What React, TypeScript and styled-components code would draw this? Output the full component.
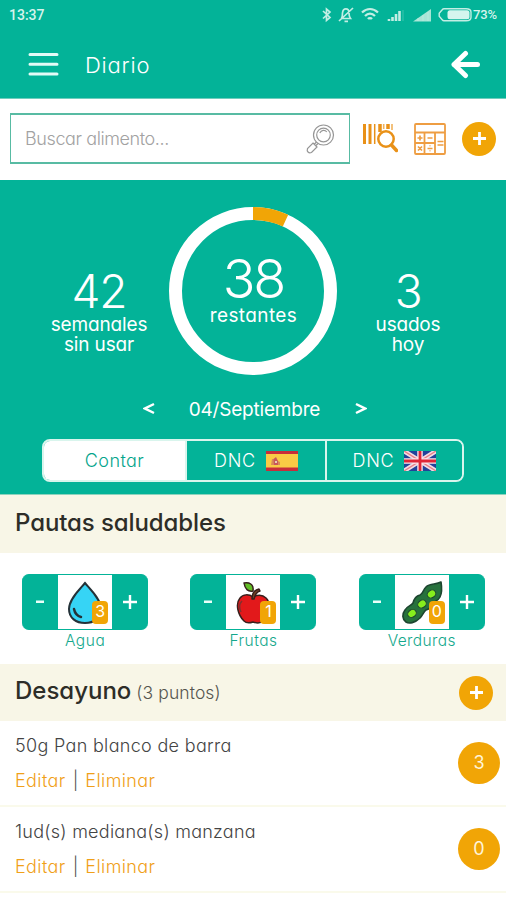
import React from "react";
import styled, { createGlobalStyle } from "styled-components";

const green = "#03b398";
const orange = "#f1a506";
const cream = "#f8f6e7";

const GlobalStyle = createGlobalStyle`
  * { box-sizing: border-box; }
  body { margin: 0; background: #fff; }
  button { font: inherit; color: inherit; background: none; border: 0; padding: 0; letter-spacing: inherit; }
  svg { display: block; flex: none; }
`;

const Screen = styled.main`
  width: 506px;
  height: 900px;
  overflow: hidden;
  background: #fff;
  color: #555;
  font-family: Inter, "Liberation Sans", sans-serif;
  font-feature-settings: "cv11";
  font-weight: 300;
  font-size: 18px;
`;

const TopBar = styled.header`
  height: 99px;
  background: ${green};
  border-bottom: 1px solid #6fcdbd;
  color: #fff;
`;

const StatusBar = styled.div`
  height: 30px;
  padding: 0 8px 0 9px;
  display: flex;
  align-items: center;
  justify-content: space-between;
  font: 500 13px/30px Roboto, sans-serif;
  color: #d5f3ec;
`;

const Clock = styled.span`
  font-size: 14px;
`;

const Percent = styled.span`
  width: 25px;
  font-size: 13px;
  letter-spacing: -0.2px;
`;

const StatusIcons = styled.div`
  display: flex;
  align-items: center;
  gap: 1px;
`;

const TitleRow = styled.div`
  height: 68px;
  padding: 0 25px 0 28px;
  display: flex;
  align-items: center;
`;

const Title = styled.h1`
  margin: 0 auto 0 26px;
  padding-top: 1px;
  font-size: 22px;
  font-weight: 350;
  letter-spacing: 0.8px;
`;

const SearchBar = styled.div`
  height: 81px;
  padding: 14px 10px 16px 10px;
  display: flex;
  align-items: center;
`;

const SearchField = styled.div`
  width: 340px;
  height: 51px;
  padding: 0 14px;
  border: 2px solid #58bba3;
  border-width: 2px 1.5px;
  display: flex;
  align-items: center;
  justify-content: space-between;
  color: #a2a2a2;
  letter-spacing: -0.4px;
`;

const SearchActions = styled.div`
  flex: 1;
  padding-left: 12px;
  display: flex;
  align-items: center;
  justify-content: space-between;
`;

const RoundButton = styled.button`
  width: 34px;
  height: 34px;
  border-radius: 50%;
  background: ${orange};
  display: grid;
  place-items: center;
`;

const Summary = styled.section`
  height: 315px;
  padding-top: 27px;
  background: ${green};
  border-bottom: 1px solid #8dd3bd;
  color: #fff;
  display: flex;
  flex-direction: column;
  align-items: center;
`;

const Figures = styled.div`
  width: 100%;
  height: 168px;
  padding-left: 29px;
  display: grid;
  grid-template-columns: 140px 168px 142px;
`;

const Figure = styled.div`
  padding-top: 61px;
  display: flex;
  flex-direction: column;
  align-items: center;
`;

const FigureValue = styled.strong<{ $large?: boolean }>`
  font-weight: 300;
  font-size: ${(p) => (p.$large ? 54 : 46)}px;
  line-height: ${(p) => (p.$large ? 54 : 47)}px;
  letter-spacing: ${(p) => (p.$large ? -2 : -1.2)}px;
`;

const FigureLabel = styled.span<{ $spacing?: number }>`
  font-weight: 400;
  font-size: 19px;
  line-height: 20px;
  letter-spacing: ${(p) => p.$spacing ?? 0}px;
  text-align: center;
  white-space: pre-line;
`;

const Dial = styled.div`
  display: grid;
  grid-template: 168px / 168px;
  & > * { grid-area: 1 / 1; }
`;

const DialText = styled.div`
  padding: 45px 0 0 1px;
  display: flex;
  flex-direction: column;
  align-items: center;
`;

const DateNav = styled.div`
  height: 38px;
  margin: 15px 0 0 3px;
  padding-top: 1px;
  width: 224px;
  display: flex;
  justify-content: space-between;
  line-height: 38px;
  font-weight: 400;
`;

const DateText = styled.span`
  font-size: 19px;
  letter-spacing: -0.2px;
`;

const Tabs = styled.div`
  margin-top: 11px;
  width: 422px;
  height: 43px;
  display: grid;
  grid-template-columns: 141px 140px 1fr;
  border: 2px solid #d9f5ed;
  border-radius: 8px;
  overflow: hidden;
`;

const Tab = styled.button<{ $active?: boolean }>`
  display: flex;
  align-items: center;
  justify-content: center;
  gap: 10px;
  font-size: 18px;
  font-weight: ${(p) => (p.$active ? 300 : 350)};
  letter-spacing: ${(p) => (p.$active ? 0.4 : 0.7)}px;
  background: ${(p) => (p.$active ? "#fff" : green)};
  color: ${(p) => (p.$active ? "#05a58c" : "#fff")};

  & + & { border-left: 2px solid #d9f5ed; }
`;

const SectionHead = styled.div<{ $height: number }>`
  height: ${(p) => p.$height}px;
  padding: 0 13px 0 15px;
  background: ${cream};
  display: flex;
  align-items: center;
  justify-content: space-between;
`;

const SectionTitle = styled.h2<{ $spacing: number }>`
  margin: 0;
  padding-bottom: 4px;
  color: #2d2d28;
  font-size: 24px;
  font-weight: 450;
  letter-spacing: ${(p) => p.$spacing}px;
`;

const Points = styled.small`
  margin-left: 5px;
  color: #55554f;
  font-size: 17.5px;
  font-weight: 300;
  letter-spacing: 0.1px;
`;

const Trackers = styled.div`
  height: 111px;
  padding: 21px 0 0 1px;
  display: grid;
  grid-template-columns: repeat(3, 1fr);
`;

const Tracker = styled.div`
  display: flex;
  flex-direction: column;
  align-items: center;
`;

const Stepper = styled.div`
  width: 126px;
  height: 56px;
  display: grid;
  grid-template-columns: 36px 54px 36px;
  border: 0 solid ${green};
  border-width: 1px 0;
  border-radius: 7px;
  background: ${green};
  overflow: hidden;
`;

const StepButton = styled.button`
  color: #eafff9;
  display: grid;
  place-items: center;
`;

const Picture = styled.div`
  position: relative;
  background: #fff;
`;

const Badge = styled.span`
  position: absolute;
  right: 4px;
  bottom: 5px;
  width: 16px;
  height: 23px;
  border-radius: 4px;
  background: ${orange};
  color: #fff;
  font-size: 16px;
  font-weight: 400;
  line-height: 21px;
  text-align: center;
`;

const TrackerLabel = styled.span<{ $spacing: number }>`
  padding-top: 1px;
  color: #14a88c;
  font-size: 15.5px;
  line-height: 20px;
  letter-spacing: ${(p) => p.$spacing}px;
`;

const Entry = styled.article`
  height: 86px;
  padding: 0 6px 0 15px;
  border-bottom: 2px solid #fafaeb;
  display: flex;
  align-items: center;
  justify-content: space-between;
`;

const EntryName = styled.div<{ $spacing: number }>`
  line-height: 35px;
  letter-spacing: ${(p) => p.$spacing}px;
  color: #444;
  white-space: nowrap;
`;

const EntryActions = styled.div`
  padding-bottom: 1px;
  display: flex;
  gap: 7px;
  line-height: 35px;
  color: #555;
`;

const Link = styled.button<{ $spacing: number }>`
  color: #f0a018;
  font-weight: 350;
  letter-spacing: ${(p) => p.$spacing}px;
`;

const Score = styled.span`
  width: 42px;
  height: 42px;
  border-radius: 50%;
  background: ${orange};
  color: #fff4d8;
  font-weight: 400;
  line-height: 42px;
  text-align: center;
`;

const Plus = ({ size = 14, weight = 3 }) => (
  <svg width={size} height={size} viewBox="0 0 14 14" stroke="#fff" strokeWidth={weight}>
    <path d="M7 0v14M0 7h14" />
  </svg>
);

const StatusGlyphs = () => (
  <svg width="153" height="18" viewBox="317 6 153 18" fill="none" stroke="#c3eee4" strokeWidth="1.7">
    <path d="M321 11l7 6.500-3.500 3V9l3.500 3-7 6.500" />
    <path d="M339.500 18.500h9c-1.500-2-1.500-3.500-1.500-5.500 0-5.500-6-5.500-6.500 0 0 2 0 4-1 5.500M337 21L351 8M342.500 21.300h3.500" />
    <path d="M360 12.500c5-4.500 11-4.500 16 0M363 16c3-3 7-3 10 0M366 19c1-1.300 3-1.300 4 0" strokeWidth="2.300" />
    <path d="M387 21v-2M390.500 21v-4M394 21v-7M397.500 21V11" strokeWidth="2.600" />
    <path d="M401 21V10" strokeWidth="1" opacity=".3" />
    <path d="M411 21.500h18V9z" fill="#a8e5d6" stroke="none" />
    <path d="M416 21v-3M421 21v-6M426 21V12" strokeWidth="1" opacity=".6" />
    <path d="M442 8.700h22q5 0 5 3.500v5q0 3.500-5 3.500h-22q-1 0-1.800-1l-3-3.500v-3l3-3.500q.8-1 1.800-1z" strokeWidth="1.400" />
    <rect x="445.500" y="10.200" width="22" height="9" rx="2.500" fill="#d5f5ee" stroke="none" />
  </svg>
);

const MenuIcon = () => (
  <svg width="31" height="26" viewBox="0 0 31 26" stroke="#e3fbf6" strokeWidth="3" strokeLinecap="round">
    <path d="M2 3.500h27M2 13.200h27M2 22.900h27" />
  </svg>
);

const BackArrow = () => (
  <svg width="31" height="30" viewBox="0 0 31 30" fill="none" stroke="#fff" strokeWidth="5" strokeLinecap="round" strokeLinejoin="round">
    <path d="M15.500 4.500L4 15.500l11.500 11M4 15.500h23.500" />
  </svg>
);

const Magnifier = () => (
  <svg width="30" height="30" viewBox="0 0 30 30" fill="none" stroke="#969696" strokeWidth="1.200">
    <circle cx="18.500" cy="11" r="10" />
    <circle cx="18.500" cy="11" r="6.800" />
    <path d="M14.800 9c1.500-3 5-3.500 7-1M11.500 18l-2.500 2.500M13 19.500L10.500 22M8 19l4 4-5.500 5.500c-3 1-5-1-4-4z" />
  </svg>
);

const BarcodeIcon = () => (
  <svg width="36" height="31" viewBox="0 0 36 31" fill="none" stroke="#e99118">
    <path d="M2.500 1v20M8 1v20" strokeWidth="3" />
    <path d="M12.700 1v20" strokeWidth="1.500" />
    <path d="M18 1v8M26 1v5" strokeWidth="3.500" />
    <path d="M21.700 1v5M30 1v6" strokeWidth="1.600" opacity=".7" />
    <circle cx="24" cy="16" r="7.700" strokeWidth="2.500" />
    <path d="M29.500 22l5 5.500" strokeWidth="3.500" strokeLinecap="round" />
  </svg>
);

const CalculatorIcon = () => (
  <svg width="32" height="32" viewBox="0 0 32 32" fill="none" stroke="#ee9d42" strokeWidth="1.800">
    <rect x="1" y="1" width="30" height="30" rx="1" />
    <path d="M1 9.500h30M1 20h20M10.500 10v21M21 10v21" />
    <path d="M3.500 15h5M6 12.500v5M13.500 15h5M4 23.500l4 4M8 23.500l-4 4M13.500 25.500h5M16 22.500v.8M16 27.500v.8M23.500 18.500h6M23.500 22h6" strokeWidth="1.700" />
  </svg>
);

const SpainFlag = () => (
  <svg width="32" height="20" viewBox="0 0 32 20">
    <path fill="#c72e3b" d="M0 0h32v20H0z" />
    <path fill="#f9cb45" d="M0 3h32v13.500H0z" />
    <path fill="#d98a58" d="M6 8h2v6H5zM12 10l2 1v3h-2z" />
    <path fill="#c8575b" d="M7.500 8L10 6l2 4v4H8z" />
    <path fill="#e6ceb3" d="M9 10h2v2H9z" />
  </svg>
);

const UkFlag = () => (
  <svg width="32" height="20" viewBox="0 0 32 20">
    <path fill="#23429a" d="M0 0h32v20H0z" />
    <path stroke="#f5dbe2" strokeWidth="4.500" d="M0 0l32 20M0 20L32 0" />
    <path stroke="#e77c86" strokeWidth="1.300" d="M0 0l32 20M0 20L32 0" />
    <path stroke="#fbe5ea" strokeWidth="5.500" d="M16 0v20M0 10h32" />
    <path stroke="#e02537" strokeWidth="2.800" d="M16 0v20M0 10h32" />
  </svg>
);

const Drop = () => (
  <svg width="54" height="54" viewBox="0 0 54 54" stroke="#243238" strokeWidth="2" strokeLinecap="round">
    <path fill="#36d4f5" d="M27 8C22 14 11 24 11 34c0 9 7 14 16 14s16-5 16-14C43 24 32 14 27 8z" />
    <path fill="none" d="M16 34c1 5 3 7 7 8" strokeWidth="2.500" />
  </svg>
);

const Apple = () => (
  <svg width="54" height="54" viewBox="0 0 54 54" stroke="#38201d" strokeWidth="1.500" strokeLinejoin="round">
    <path fill="#e2191b" d="M27 22c-4-3-10-3-13 1-5 6-2 17 4 23 3 3 6 2 9 1 3 1 7 2 10-1 6-6 9-17 3-23-4-4-9-3-13-1z" />
    <path fill="#754326" d="M26 24c0-5 2-9 7-10l1 2c-4 1-5 4-6 8z" />
    <path fill="#62bd27" d="M27 16c-5 1-8-2-9-8 5-1 10 1 9 8z" />
    <path fill="none" stroke="#7e3230" d="M15 37c-2-4-2-8 1-11" />
  </svg>
);

const Peas = () => (
  <svg width="54" height="54" viewBox="0 0 54 54" stroke="#1d4530" strokeWidth="1.600" strokeLinejoin="round">
    <path fill="#27713d" d="M46 7c1 6 1 11-1 15-2 4-5 4-7 6-1 4-3 6-7 7-2 1-3 5-6 8-5 5-11 6-14 4-4-3-4-8-1-12 2-4 6-4 8-7 1-4 3-7 7-8 3-1 3-5 6-8 4-4 10-2 15-5z" />
    <g fill="#86ee1d" strokeWidth="1">
      <ellipse cx="36.500" cy="19" rx="4.500" ry="3.700" transform="rotate(-35 36.500 19)" />
      <ellipse cx="27" cy="29" rx="4.500" ry="3.700" transform="rotate(-35 27 29)" />
      <ellipse cx="17" cy="38.500" rx="4.500" ry="3.700" transform="rotate(-35 17 38.500)" />
    </g>
  </svg>
);

const trackers = [
  { label: "Agua", count: 3, spacing: 0.6, picture: <Drop /> },
  { label: "Frutas", count: 1, spacing: 0.5, picture: <Apple /> },
  { label: "Verduras", count: 0, spacing: 0.4, picture: <Peas /> },
];

const entries = [
  { name: "50g Pan blanco de barra", score: 3, spacing: 0.32 },
  { name: "1ud(s) mediana(s) manzana", score: 0, spacing: 0.25 },
];

export default function App() {
  return (
    <Screen>
      <GlobalStyle />
      <TopBar>
        <StatusBar>
          <Clock>13:37</Clock>
          <StatusIcons>
            <StatusGlyphs />
            <Percent>73%</Percent>
          </StatusIcons>
        </StatusBar>
        <TitleRow>
          <MenuIcon />
          <Title>Diario</Title>
          <BackArrow />
        </TitleRow>
      </TopBar>

      <SearchBar>
        <SearchField>
          <span>Buscar alimento...</span>
          <Magnifier />
        </SearchField>
        <SearchActions>
          <BarcodeIcon />
          <CalculatorIcon />
          <RoundButton><Plus size={13} weight={3} /></RoundButton>
        </SearchActions>
      </SearchBar>

      <Summary>
        <Figures>
          <Figure>
            <FigureValue>42</FigureValue>
            <FigureLabel $spacing={-0.15}>{"semanales\nsin usar"}</FigureLabel>
          </Figure>
          <Dial>
            <svg width="168" height="168" viewBox="0 0 168 168" fill="none" strokeWidth="13">
              <circle cx="84" cy="84" r="77.500" stroke="#fff" />
              <path d="M84 6.500A77.500 77.500 0 0 1 116.500 13.600" stroke={orange} />
            </svg>
            <DialText>
              <FigureValue $large>38</FigureValue>
              <FigureLabel $spacing={0.4}>restantes</FigureLabel>
            </DialText>
          </Dial>
          <Figure>
            <FigureValue>3</FigureValue>
            <FigureLabel $spacing={-0.2}>{"usados\nhoy"}</FigureLabel>
          </Figure>
        </Figures>
        <DateNav>
          <svg width="12" height="36" viewBox="0 0 12 36" fill="none" stroke="#fff" strokeWidth="2.500"><path d="M11 13L2 17.500l9 4.500" /></svg>
          <DateText>04/Septiembre</DateText>
          <svg width="12" height="36" viewBox="0 0 12 36" fill="none" stroke="#fff" strokeWidth="2.500"><path d="M1 13l9 4.500L1 22" /></svg>
        </DateNav>
        <Tabs>
          <Tab $active>Contar</Tab>
          <Tab>DNC <SpainFlag /></Tab>
          <Tab>DNC <UkFlag /></Tab>
        </Tabs>
      </Summary>

      <SectionHead $height={58}>
        <SectionTitle $spacing={-0.1}>Pautas saludables</SectionTitle>
      </SectionHead>
      <Trackers>
        {trackers.map((t) => (
          <Tracker key={t.label}>
            <Stepper>
              <StepButton>
                <svg width="8" height="4" viewBox="0 0 8 4"><path d="M0 .5h8v2.500H0z" fill="#eafff9" /></svg>
              </StepButton>
              <Picture>
                {t.picture}
                <Badge>{t.count}</Badge>
              </Picture>
              <StepButton><Plus size={14} weight={2.4} /></StepButton>
            </Stepper>
            <TrackerLabel $spacing={t.spacing}>{t.label}</TrackerLabel>
          </Tracker>
        ))}
      </Trackers>

      <SectionHead $height={57}>
        <SectionTitle $spacing={0}>
          Desayuno<Points>(3 puntos)</Points>
        </SectionTitle>
        <RoundButton><Plus size={13} weight={3} /></RoundButton>
      </SectionHead>
      {entries.map((e) => (
        <Entry key={e.name}>
          <div>
            <EntryName $spacing={e.spacing}>{e.name}</EntryName>
            <EntryActions>
              <Link $spacing={0.4}>Editar</Link>|<Link $spacing={0.4}>Eliminar</Link>
            </EntryActions>
          </div>
          <Score>{e.score}</Score>
        </Entry>
      ))}
    </Screen>
  );
}
